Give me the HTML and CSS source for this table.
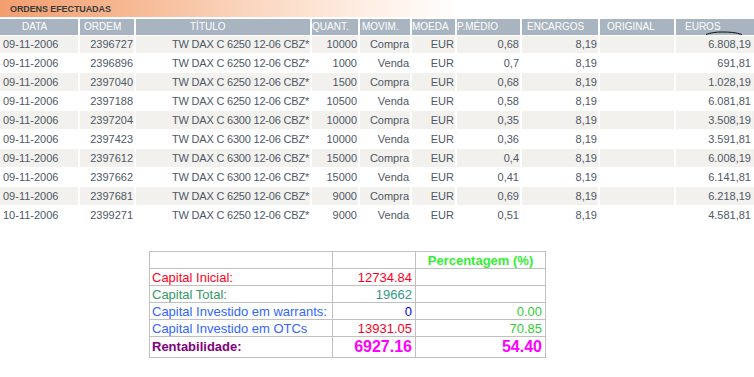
FILE: index.html
```html
<!DOCTYPE html>
<html>
<head>
<meta charset="utf-8">
<link rel="stylesheet" href="styles.css">
</head>
<body>
<div class="page">
  <div class="title">ORDENS EFECTUADAS</div>
  <div class="orders">
    <div class="row head">
      <span class="h-data">DATA</span><span class="h-ordem">ORDEM</span><span class="h-titulo">TÍTULO</span><span class="h-quant">QUANT.</span><span class="h-movim">MOVIM.</span><span class="h-moeda">MOEDA</span><span class="h-preco">P.MÉDIO</span><span class="h-enc">ENCARGOS</span><span class="h-orig">ORIGINAL</span><span class="h-euros">EUROS</span>
      <svg class="squiggle" width="40" height="6" viewBox="0 0 40 6"><path d="M1 4.5 C6 2.6 11 2 17 2 C25 2 31 2.4 37 4.5" fill="none" stroke="#111" stroke-width="1"/></svg>
    </div>
    <div class="row shaded first"><span class="c-data">09-11-2006</span><span class="r">2396727</span><span class="r">TW DAX C 6250 12-06 CBZ*</span><span class="r">10000</span><span class="r">Compra</span><span class="r">EUR</span><span class="r">0,68</span><span class="r">8,19</span><span></span><span class="r c-euros">6.808,19</span></div>
    <div class="row"><span class="c-data">09-11-2006</span><span class="r">2396896</span><span class="r">TW DAX C 6250 12-06 CBZ*</span><span class="r">1000</span><span class="r">Venda</span><span class="r">EUR</span><span class="r">0,7</span><span class="r">8,19</span><span></span><span class="r c-euros">691,81</span></div>
    <div class="row shaded"><span class="c-data">09-11-2006</span><span class="r">2397040</span><span class="r">TW DAX C 6250 12-06 CBZ*</span><span class="r">1500</span><span class="r">Compra</span><span class="r">EUR</span><span class="r">0,68</span><span class="r">8,19</span><span></span><span class="r c-euros">1.028,19</span></div>
    <div class="row"><span class="c-data">09-11-2006</span><span class="r">2397188</span><span class="r">TW DAX C 6250 12-06 CBZ*</span><span class="r">10500</span><span class="r">Venda</span><span class="r">EUR</span><span class="r">0,58</span><span class="r">8,19</span><span></span><span class="r c-euros">6.081,81</span></div>
    <div class="row shaded"><span class="c-data">09-11-2006</span><span class="r">2397204</span><span class="r">TW DAX C 6300 12-06 CBZ*</span><span class="r">10000</span><span class="r">Compra</span><span class="r">EUR</span><span class="r">0,35</span><span class="r">8,19</span><span></span><span class="r c-euros">3.508,19</span></div>
    <div class="row"><span class="c-data">09-11-2006</span><span class="r">2397423</span><span class="r">TW DAX C 6300 12-06 CBZ*</span><span class="r">10000</span><span class="r">Venda</span><span class="r">EUR</span><span class="r">0,36</span><span class="r">8,19</span><span></span><span class="r c-euros">3.591,81</span></div>
    <div class="row shaded"><span class="c-data">09-11-2006</span><span class="r">2397612</span><span class="r">TW DAX C 6300 12-06 CBZ*</span><span class="r">15000</span><span class="r">Compra</span><span class="r">EUR</span><span class="r">0,4</span><span class="r">8,19</span><span></span><span class="r c-euros">6.008,19</span></div>
    <div class="row"><span class="c-data">09-11-2006</span><span class="r">2397662</span><span class="r">TW DAX C 6300 12-06 CBZ*</span><span class="r">15000</span><span class="r">Venda</span><span class="r">EUR</span><span class="r">0,41</span><span class="r">8,19</span><span></span><span class="r c-euros">6.141,81</span></div>
    <div class="row shaded"><span class="c-data">09-11-2006</span><span class="r">2397681</span><span class="r">TW DAX C 6250 12-06 CBZ*</span><span class="r">9000</span><span class="r">Compra</span><span class="r">EUR</span><span class="r">0,69</span><span class="r">8,19</span><span></span><span class="r c-euros">6.218,19</span></div>
    <div class="row"><span class="c-data">10-11-2006</span><span class="r">2399271</span><span class="r">TW DAX C 6250 12-06 CBZ*</span><span class="r">9000</span><span class="r">Venda</span><span class="r">EUR</span><span class="r">0,51</span><span class="r">8,19</span><span></span><span class="r c-euros">4.581,81</span></div>
  </div>

  <table class="summary">
    <colgroup><col class="col-label"><col class="col-value"><col class="col-pct"></colgroup>
    <tr><td></td><td></td><td class="pct-head">Percentagem (%)</td></tr>
    <tr><td class="red">Capital Inicial:</td><td class="num red">12734.84</td><td></td></tr>
    <tr><td class="teal">Capital Total:</td><td class="num teal2">19662</td><td></td></tr>
    <tr><td class="blue">Capital Investido em warrants:</td><td class="num dblue">0</td><td class="num green">0.00</td></tr>
    <tr><td class="blue">Capital Investido em OTCs</td><td class="num red">13931.05</td><td class="num green">70.85</td></tr>
    <tr class="total"><td class="purple">Rentabilidade:</td><td class="num magenta">6927.16</td><td class="num magenta">54.40</td></tr>
  </table>
</div>
</body>
</html>
```

FILE: styles.css
```css
html, body {
  margin: 0;
  padding: 0;
  background: #ffffff;
}

.page {
  font-family: "Liberation Sans", Arial, sans-serif;
  width: 754px;
}

.title {
  height: 17px;
  line-height: 18px;
  padding-left: 10px;
  margin-bottom: 2px;
  font-size: 9px;
  font-weight: bold;
  letter-spacing: -0.1px;
  color: #3b3b3b;
  background: linear-gradient(to right, #f29e6f 0px, #f6b690 120px, #fbd8c2 260px, #fff1e8 380px, #ffffff 460px);
}

.orders {
  display: flex;
  flex-direction: column;
  gap: 1px;
}

.row {
  display: grid;
  grid-template-columns: 78px 54px 174px 46px 50px 43px 63px 76px 74px 78px;
  column-gap: 2px;
  height: 18px;
  line-height: 18px;
  font-size: 11px;
  color: #4e5866;
  white-space: nowrap;
}

.row > span {
  overflow: hidden;
}

.row > span:nth-child(3) {
  letter-spacing: -0.2px;
}

.row.first {
  height: 17px;
  line-height: 16px;
}

.row .r {
  text-align: right;
  padding-right: 1px;
}

.row .c-data {
  padding-left: 3px;
}

.row .c-euros {
  padding-right: 3px;
}

.row.shaded > span {
  background: #f2f1ed;
}

.row.head {
  position: relative;
  height: 16px;
  line-height: 16px;
  font-size: 10px;
  color: #ffffff;
}

.row.head > span {
  background: #a8b4bf;
  letter-spacing: 0;
}

.h-data { padding-left: 22px; }
.h-ordem { padding-left: 4px; }
.h-titulo { padding-left: 54px; }
.h-quant { padding-left: 0; }
.h-movim { padding-left: 2px; }
.h-moeda { padding-left: 0; }
.h-preco { padding-left: 0; }
.h-enc { padding-left: 5px; }
.h-orig { padding-left: 7px; }
.h-euros { padding-left: 9px; }

.squiggle {
  position: absolute;
  left: 705px;
  top: 11px;
}

.summary {
  margin: 27px 0 0 149px;
  border-collapse: collapse;
  table-layout: fixed;
  width: 396px;
  font-size: 13px;
}

.col-label { width: 183px; }
.col-value { width: 83px; }
.col-pct { width: 130px; }

.summary td {
  border: 1px solid #c0c0c0;
  height: 16px;
  padding: 0 2px;
  line-height: 15px;
  white-space: nowrap;
  overflow: hidden;
}

.summary td.num {
  text-align: right;
  padding-right: 3px;
}

.summary .pct-head {
  text-align: center;
  font-weight: bold;
  color: #33ee33;
}

.summary tr.total td {
  height: 20px;
  line-height: 20px;
  font-weight: bold;
}

.summary tr.total td.num {
  font-size: 16px;
}

.red { color: #ff0022; }
.teal { color: #339966; }
.teal2 { color: #339988; }
.blue { color: #3366ff; }
.dblue { color: #0000ff; }
.green { color: #33cc33; }
.purple { color: #800080; }
.magenta { color: #ff00ff; }
```
